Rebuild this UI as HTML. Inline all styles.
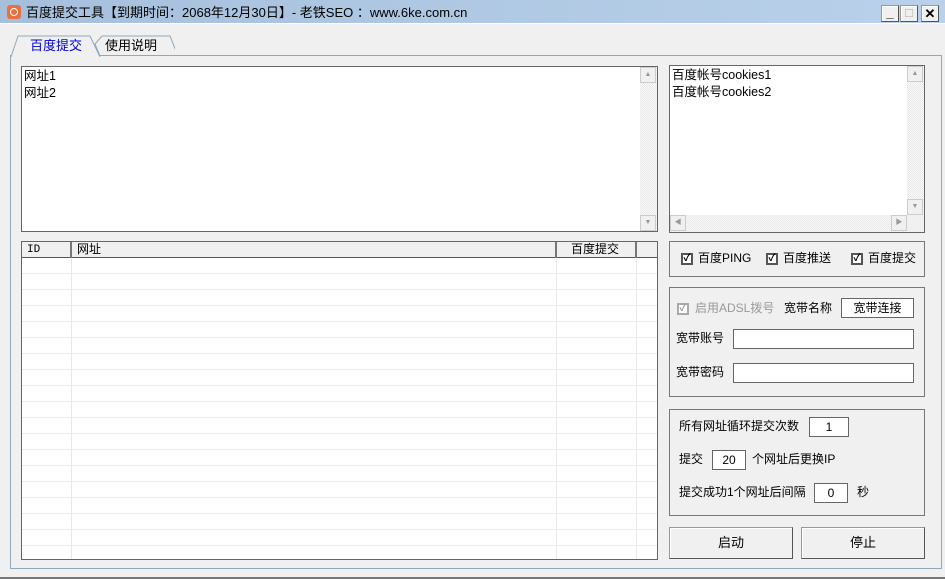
<!DOCTYPE html><html><head><meta charset="utf-8"><style>
*{margin:0;padding:0;box-sizing:border-box}
body{width:945px;height:579px;background:#f0f0f0;font-family:"Liberation Sans","Noto Sans CJK SC",sans-serif;font-size:12px;line-height:15px;color:#000;position:relative;overflow:hidden;border-bottom:2px solid #777}
.a{position:absolute}
.title{left:0;top:0;width:945px;height:24px;background:linear-gradient(90deg,#a6bfdc,#b9d1ea);border-bottom:1px solid #fff}
.tb{border:1px solid #666;background:#fff}
.grp{border:1px solid #777}
.btn{background:#f0f0f0;border:1px solid #999;border-right-color:#555;border-bottom-color:#555;box-shadow:inset 1px 1px #fff;text-align:center;line-height:29px;font-size:13px}
.cb{width:12px;height:12px;border:2px solid #555;background:#fff;font-size:10px;line-height:8px;text-align:center;font-weight:bold}
.inp{background:#fff;border:1px solid #666;text-align:center;line-height:18px}
.sb{background:repeating-conic-gradient(#e8e8e8 0 25%,#fafafa 0 50%) 0 0/2px 2px}
.sbtn{background:#f0f0f0;border:1px solid #ccc;width:16px;height:16px;font-size:7px;color:#999;text-align:center;line-height:14px}
</style></head><body>
<div class="a title"></div>
<div class="a" style="left:7px;top:5px;width:14px;height:14px;background:#e8713d;border-radius:3px"><div style="margin:3px;width:8px;height:8px;border:1.5px solid #fff;border-radius:50%"></div></div>
<div class="a" style="left:26px;top:5px;font-size:13px">百度提交工具【到期时间：2068年12月30日】- 老铁SEO ：www.6ke.com.cn</div>
<div class="a btn" style="left:881px;top:5px;width:18px;height:17px;line-height:14px;font-weight:bold">_</div>
<div class="a btn" style="left:900px;top:5px;width:18px;height:17px;line-height:14px;color:#aaa">□</div>
<div class="a btn" style="left:921px;top:5px;width:18px;height:17px;line-height:16px;font-weight:bold">✕</div>
<div class="a" style="left:10px;top:55px;width:932px;height:514px;border:1px solid #8fa8bb"></div>
<svg class="a" style="left:10px;top:34px" width="165" height="23"><path d="M90,22 L85,10 L92,2 L160,2 L168,22" fill="#f0f0f0" stroke="#8fa8bb"/><line x1="90" y1="21.5" x2="165" y2="21.5" stroke="#8fa8bb"/><path d="M1,23 L8,2 L80,2 L90,23" fill="#f0f0f0" stroke="#8fa8bb"/></svg>
<div class="a" style="left:30px;top:38px;font-size:13px;color:#0000e0">百度提交</div>
<div class="a" style="left:105px;top:38px;font-size:13px">使用说明</div>
<div class="a tb" style="left:21px;top:66px;width:637px;height:166px"><div style="padding:1px 2px;line-height:17px;font-size:12.5px">网址1<br>网址2</div>
<div class="a sb" style="right:0;top:0;width:17px;height:164px"><div class="a sbtn" style="top:0">▲</div><div class="a sbtn" style="bottom:0">▼</div></div></div>
<div class="a tb" style="left:669px;top:65px;width:256px;height:168px"><div style="padding:1px 2px;line-height:17px;font-size:12.5px">百度帐号cookies1<br>百度帐号cookies2</div>
<div class="a sb" style="right:0;top:0;width:17px;height:149px"><div class="a sbtn" style="top:0">▲</div><div class="a sbtn" style="bottom:0">▼</div></div>
<div class="a sb" style="left:0;bottom:0;width:237px;height:17px"><div class="a sbtn" style="left:0">◀</div><div class="a sbtn" style="right:0">▶</div></div><div class="a" style="right:0;bottom:0;width:17px;height:17px;background:#f0f0f0"></div></div>
<div class="a tb" style="left:21px;top:241px;width:637px;height:319px;background:#fff repeating-linear-gradient(#fff 0 15px,#ececec 15px 16px);background-position:0 16px">
<div class="a" style="left:0;top:0;width:635px;height:16px;background:#f0f0f0;border-bottom:1px solid #555"></div>
<div class="a" style="left:49px;top:0;width:1px;height:317px;background:#e8e8e8"></div>
<div class="a" style="left:534px;top:0;width:1px;height:317px;background:#e8e8e8"></div>
<div class="a" style="left:614px;top:0;width:1px;height:317px;background:#e8e8e8"></div>
<div class="a" style="left:48px;top:0;width:2px;height:16px;background:#777"></div>
<div class="a" style="left:533px;top:0;width:2px;height:16px;background:#777"></div>
<div class="a" style="left:613px;top:0;width:2px;height:16px;background:#777"></div>
<div class="a" style="left:5px;top:1px;font-size:11px;font-family:'Liberation Mono'">ID</div>
<div class="a" style="left:55px;top:0px">网址</div>
<div class="a" style="left:549px;top:0px">百度提交</div>
</div>
<div class="a grp" style="left:669px;top:241px;width:256px;height:36px"></div>
<div class="a cb" style="left:681px;top:253px">✓</div><div class="a" style="left:698px;top:251px">百度PING</div>
<div class="a cb" style="left:766px;top:253px">✓</div><div class="a" style="left:783px;top:251px">百度推送</div>
<div class="a cb" style="left:851px;top:253px">✓</div><div class="a" style="left:868px;top:251px">百度提交</div>
<div class="a grp" style="left:669px;top:287px;width:256px;height:110px"></div>
<div class="a cb" style="left:677px;top:303px;border-color:#aaa;color:#999">✓</div><div class="a" style="left:695px;top:301px;color:#999">启用ADSL拨号</div>
<div class="a" style="left:784px;top:301px">宽带名称</div>
<div class="a inp" style="left:841px;top:298px;width:73px;height:20px">宽带连接</div>
<div class="a" style="left:676px;top:331px">宽带账号</div>
<div class="a inp" style="left:733px;top:329px;width:181px;height:20px"></div>
<div class="a" style="left:676px;top:365px">宽带密码</div>
<div class="a inp" style="left:733px;top:363px;width:181px;height:20px"></div>
<div class="a grp" style="left:669px;top:409px;width:256px;height:107px"></div>
<div class="a" style="left:679px;top:419px">所有网址循环提交次数</div>
<div class="a inp" style="left:809px;top:417px;width:40px;height:20px">1</div>
<div class="a" style="left:679px;top:452px">提交</div>
<div class="a inp" style="left:712px;top:450px;width:34px;height:20px">20</div>
<div class="a" style="left:752px;top:452px">个网址后更换IP</div>
<div class="a" style="left:679px;top:485px">提交成功1个网址后间隔</div>
<div class="a inp" style="left:814px;top:483px;width:34px;height:20px">0</div>
<div class="a" style="left:857px;top:485px">秒</div>
<div class="a btn" style="left:669px;top:527px;width:124px;height:32px">启动</div>
<div class="a btn" style="left:801px;top:527px;width:124px;height:32px">停止</div>
</body></html>
